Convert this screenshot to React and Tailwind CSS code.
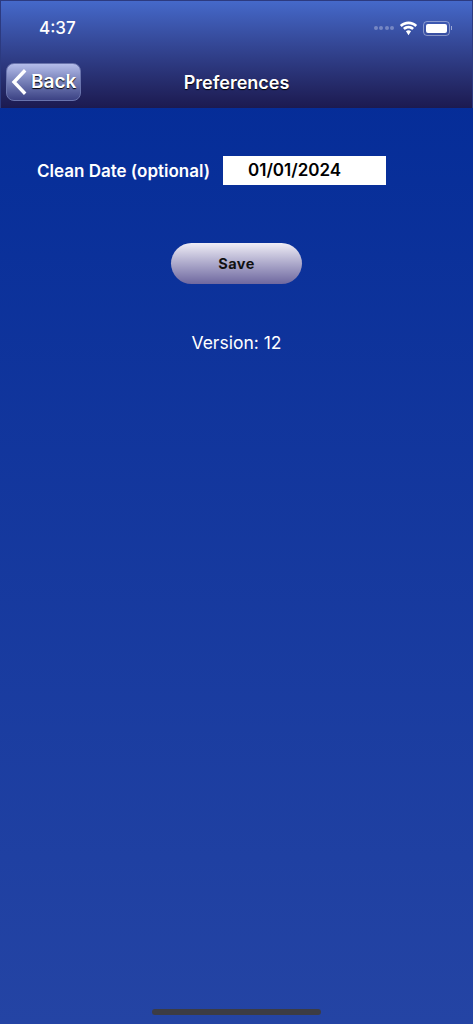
import React from "react";

const font = "font-['Inter','Liberation_Sans',sans-serif]";

function Wifi() {
  return (
    <svg width="19" height="15" viewBox="0 0 18 14" fill="#fff">
      <path d="M9 3c2.500 0 4.700 1 6.400 2.600L17.200 3.700C15 1.600 12.200.4 9 .4S3 1.600.8 3.700l1.800 1.900C4.300 4 6.500 3 9 3z" />
      <path d="M9 7c1.300 0 2.500.5 3.400 1.400l1.800-1.900C12.800 5.100 11 4.300 9 4.300s-3.800.8-5.200 2.200l1.800 1.900C6.500 7.500 7.700 7 9 7z" />
      <path d="M9 8.600c-1 0-1.800.4-2.400 1L9 13.400l2.400-3.800c-.6-.6-1.400-1-2.400-1z" />
    </svg>
  );
}

function Battery() {
  return (
    <div className="flex items-center">
      <div className="w-[27px] h-[15px] rounded-[4px] border border-white/40 p-[2px]">
        <div className="w-full h-full rounded-[2px] bg-white" />
      </div>
      <div className="w-[1px] h-[4px] bg-white/50 ml-[1px]" />
    </div>
  );
}

export default function App() {
  return (
    <div className={`${font} w-[473px] h-[1024px] flex flex-col overflow-hidden bg-gradient-to-b from-[#022a97] to-[#2444a4]`}>
      {/* Nav bar */}
      <div className="h-[108px] shrink-0 bg-gradient-to-b from-[#4569ca] to-[#1c1a50] border-t border-x border-[#2c3a80] border-b-[#15143c] flex flex-col">
        <div className="flex items-center justify-between h-[54px] pl-[38px] pr-[20px]">
          <span className="text-white text-[17px] font-medium mt-[2px]">4:37</span>
          <div className="flex items-center gap-[5px]">
            <div className="flex gap-[1.500px]">
              <div className="w-[4px] h-[4px] rounded-full bg-white/30" />
              <div className="w-[4px] h-[4px] rounded-full bg-white/30" />
              <div className="w-[4px] h-[4px] rounded-full bg-white/30" />
              <div className="w-[4px] h-[4px] rounded-full bg-white/30" />
            </div>
            <Wifi />
            <Battery />
          </div>
        </div>
        <div className="relative flex items-center justify-center h-[38px] mt-[8px]">
          <span className="text-white text-[18px] font-semibold [text-shadow:0_1px_1px_#000]">Preferences</span>
          <div className="absolute left-[5px] top-0 w-[75px] h-[38px] rounded-[8px] border border-[#6a74ad] bg-gradient-to-b from-[#b4bdea] to-[#3c4284] flex items-center pl-[4px] gap-[4px]">
            <svg width="16" height="26" viewBox="0 0 16 26" fill="none" stroke="#fff" strokeWidth="3.400" strokeLinecap="square">
              <path d="M13 2.500 3 13l10 10.500" />
            </svg>
            <span className="text-white text-[19px] font-semibold [text-shadow:0_1px_1px_#000]">Back</span>
          </div>
        </div>
      </div>

      {/* Form */}
      <div className="flex flex-col items-center flex-1">
        <div className="flex items-center self-start mt-[48px] pl-[37px]">
          <span className="w-[186px] text-white text-[17px] font-semibold whitespace-nowrap mt-[3px]">Clean Date (optional)</span>
          <div className="w-[163px] h-[29px] bg-white flex items-center pl-[25px] text-black text-[17px] font-semibold">01/01/2024</div>
        </div>
        <button className="mt-[58px] w-[131px] h-[41px] rounded-full bg-gradient-to-b from-[#f0eef6] to-[#6f689f] text-[#111] text-[14.500px] font-bold tracking-[0.4px]">
          Save
        </button>
        <p className="mt-[48px] text-white text-[17.500px] leading-[22px]">Version: 12</p>
      </div>

      {/* Home indicator */}
      <div className="flex justify-center pb-[9px]">
        <div className="w-[169px] h-[6px] rounded-full bg-[#3c3c44]" />
      </div>
    </div>
  );
}
